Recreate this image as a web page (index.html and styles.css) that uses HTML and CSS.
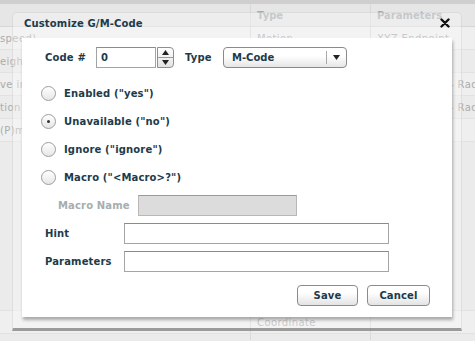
FILE: index.html
```html
<!DOCTYPE html>
<html>
<head>
<meta charset="utf-8">
<link rel="stylesheet" href="styles.css">
</head>
<body>
<div class="page">
  <div class="topbar"></div>
  <table class="grid">
    <thead>
      <tr><th class="c1"></th><th class="c2">Type</th><th class="c3">Parameters</th></tr>
    </thead>
    <tbody>
      <tr><td class="c1">speed)</td><td class="c2">Motion</td><td class="c3">XYZ Endpoint</td></tr>
      <tr><td class="c1">eight</td><td class="c2"></td><td class="c3"></td></tr>
      <tr><td class="c1">ve in</td><td class="c2"></td><td class="c3 rad">- Rad</td></tr>
      <tr><td class="c1">tion</td><td class="c2"></td><td class="c3 rad">- Rad</td></tr>
      <tr><td class="c1">(P)m</td><td class="c2"></td><td class="c3"></td></tr>
      <tr class="tall"><td class="c1"></td><td class="c2"></td><td class="c3"></td></tr>
      <tr><td class="c1"></td><td class="c2">Coordinate</td><td class="c3"></td></tr>
      <tr class="last"><td class="c1"></td><td class="c2"></td><td class="c3"></td></tr>
    </tbody>
  </table>
</div>

<div class="frame">
  <div class="title">Customize G/M-Code</div>
  <button class="close" aria-label="Close">
    <svg width="10" height="10" viewBox="0 0 10 10"><path d="M1.5 1.5 L8.5 8.5 M8.5 1.5 L1.5 8.5" stroke="#111" stroke-width="2.4" stroke-linecap="round"/></svg>
  </button>
  <div class="panel">
    <div class="code-row">
      <span class="lbl">Code #</span>
      <div class="spin">
        <span class="spin-input">0</span>
        <span class="spin-btns">
          <span class="spin-b up"><svg width="7" height="5" viewBox="0 0 7 5"><path d="M0 5 L3.5 0 L7 5Z" fill="#222"/></svg></span>
          <span class="spin-b dn"><svg width="7" height="5" viewBox="0 0 7 5"><path d="M0 0 L3.5 5 L7 0Z" fill="#222"/></svg></span>
        </span>
      </div>
      <span class="lbl type-lbl">Type</span>
      <div class="select">
        <span class="sel-text">M-Code</span>
        <span class="sel-arrow"><svg width="7" height="5" viewBox="0 0 7 5"><path d="M0 0 L3.5 5 L7 0Z" fill="#222"/></svg></span>
      </div>
    </div>

    <div class="radios">
      <div class="radio-row"><span class="radio"></span><span class="lbl">Enabled ("yes")</span></div>
      <div class="radio-row"><span class="radio on"></span><span class="lbl">Unavailable ("no")</span></div>
      <div class="radio-row"><span class="radio"></span><span class="lbl">Ignore ("ignore")</span></div>
      <div class="radio-row"><span class="radio"></span><span class="lbl">Macro ("&lt;Macro&gt;?")</span></div>
    </div>

    <div class="field macro">
      <span class="lbl dim">Macro Name</span>
      <span class="input disabled"></span>
    </div>
    <div class="field hint">
      <span class="lbl">Hint</span>
      <span class="input wide"></span>
    </div>
    <div class="field params">
      <span class="lbl">Parameters</span>
      <span class="input wide"></span>
    </div>

    <div class="buttons">
      <button class="btn save">Save</button>
      <button class="btn cancel">Cancel</button>
    </div>
  </div>
</div>
</body>
</html>
```

FILE: styles.css
```css
html, body {
  margin: 0;
  padding: 0;
  overflow: hidden;
}
body {
  width: 475px;
  height: 341px;
  background: #ebebeb;
  font-family: "DejaVu Sans", Verdana, sans-serif;
  font-size: 10px;
  position: relative;
}
.page {
  width: 475px;
  height: 341px;
  overflow: hidden;
}
.topbar {
  height: 4px;
  background: #cfcfcf;
}
.grid {
  border-collapse: collapse;
  width: 475px;
  table-layout: fixed;
  color: #ababab;
}
.grid th {
  height: 22px;
  text-align: left;
  font-weight: bold;
  color: #a4abb0;
  background: #e6e6e6;
  border-bottom: 1px solid #d6d6d6;
  padding: 0 0 0 6px;
  vertical-align: middle;
}
.grid td {
  height: 22px;
  padding: 0 0 0 6px;
  border-bottom: 1px solid #e2e2e2;
  white-space: nowrap;
  overflow: hidden;
  letter-spacing: 0.4px;
  vertical-align: middle;
}
.grid tbody tr:nth-child(odd) td { background: #efefef; }
.grid tbody tr:nth-child(even) td { background: #ebebeb; }
.grid .tall td { height: 168px; }
.grid .last td { height: 6px; border-bottom: 0; }
.grid .c1 { width: 250px; padding-left: 0; }
.grid .c2 { width: 113px; border-left: 1px solid #d9d9d9; }
.grid .c3 { border-left: 1px solid #d9d9d9; }
.grid .c3.rad { padding-left: 79px; }

.frame {
  position: absolute;
  left: 12px;
  top: 12px;
  width: 450px;
  height: 319px;
  box-sizing: border-box;
  background: rgba(250, 250, 250, 0.38);
  border: 1px solid rgba(0, 0, 0, 0.08);
  border-radius: 5px 5px 0 0;
  border-bottom: 3px solid rgba(80, 80, 80, 0.55);
  padding: 0 9px 0 9px;
}
.title {
  height: 25px;
  line-height: 21px;
  padding-left: 2px;
  font-weight: bold;
  color: #1d3b4a;
  letter-spacing: 0.15px;
}
.close {
  position: absolute;
  right: 10px;
  top: 4px;
  width: 12px;
  height: 12px;
  border: 0;
  padding: 0;
  background: transparent;
  display: flex;
  align-items: center;
  justify-content: center;
}
.panel {
  width: 430px;
  height: 279px;
  box-sizing: border-box;
  background: #fff;
  box-shadow: 1px 3px 3px rgba(0, 0, 0, 0.3);
  padding: 9px 22px 0 23px;
  display: flex;
  flex-direction: column;
}
.lbl {
  font-weight: bold;
  color: #1d3b4a;
  white-space: nowrap;
  letter-spacing: 0.15px;
}
.lbl.dim { color: #a6aeae; }

.code-row {
  display: flex;
  align-items: center;
  height: 21px;
}
.code-row > .lbl:first-child { width: 51px; }
.spin {
  display: flex;
  height: 21px;
}
.spin-input {
  width: 60px;
  height: 21px;
  box-sizing: border-box;
  border: 1px solid #a3a3a3;
  border-top-color: #8c8c8c;
  font-weight: bold;
  color: #1d3b4a;
  padding-left: 4px;
  line-height: 19px;
}
.spin-btns {
  display: flex;
  flex-direction: column;
  width: 17px;
  height: 21px;
  margin-left: 1px;
  box-sizing: border-box;
  border: 1px solid #8f8f8f;
  border-radius: 0 4px 4px 0;
  background: linear-gradient(#ffffff, #e4e4e4);
  overflow: hidden;
}
.spin-b {
  flex: 1;
  display: flex;
  align-items: center;
  justify-content: center;
}
.spin-b.up { border-bottom: 1px solid #9a9a9a; }
.type-lbl { margin-left: 11px; width: 38px; }
.select {
  width: 124px;
  height: 21px;
  box-sizing: border-box;
  border: 1px solid #8a8a8a;
  border-radius: 4px;
  background: linear-gradient(#ffffff 40%, #e6e6e6);
  display: flex;
  align-items: center;
}
.sel-text {
  flex: 1;
  padding-left: 8px;
  font-weight: bold;
  color: #1d3b4a;
}
.sel-arrow {
  width: 19px;
  height: 13px;
  border-left: 1px solid #a8a8a8;
  display: flex;
  align-items: center;
  justify-content: center;
}

.radios {
  margin-top: 11px;
  margin-left: -4px;
}
.radio-row {
  height: 28px;
  display: flex;
  align-items: center;
}
.radio {
  width: 15px;
  height: 15px;
  box-sizing: border-box;
  border-radius: 50%;
  border: 1px solid #9d9d9d;
  background: linear-gradient(#ffffff, #e6e6e6);
  margin-right: 8px;
  display: flex;
  align-items: center;
  justify-content: center;
}
.radio.on::after {
  content: "";
  width: 3px;
  height: 3px;
  border-radius: 50%;
  background: #333;
}

.field {
  display: flex;
  align-items: center;
  height: 21px;
}
.field .lbl { width: 79px; }
.macro { margin-top: 4px; padding-left: 13px; }
.macro .lbl { width: 80px; }
.hint { margin-top: 7px; }
.params { margin-top: 7px; }
.input {
  display: block;
  height: 21px;
  box-sizing: border-box;
  border: 1px solid #a5a5a5;
  border-top-color: #8a8a8a;
  background: #fff;
}
.input.disabled {
  width: 159px;
  background: #dcdcdc;
  border-color: #b8b8b8;
  border-top-color: #9a9a9a;
}
.input.wide { width: 265px; }

.buttons {
  margin-top: 13px;
  display: flex;
  justify-content: flex-end;
  gap: 9px;
}
.btn {
  height: 21px;
  box-sizing: border-box;
  border: 1px solid #8b8b8b;
  border-radius: 4px;
  background: linear-gradient(#ffffff 35%, #e3e3e3);
  font-family: "DejaVu Sans", Verdana, sans-serif;
  font-size: 10px;
  font-weight: bold;
  color: #1d3b4a;
  padding: 0;
  letter-spacing: 0.15px;
}
.btn.save { width: 61px; }
.btn.cancel { width: 63px; }
```
